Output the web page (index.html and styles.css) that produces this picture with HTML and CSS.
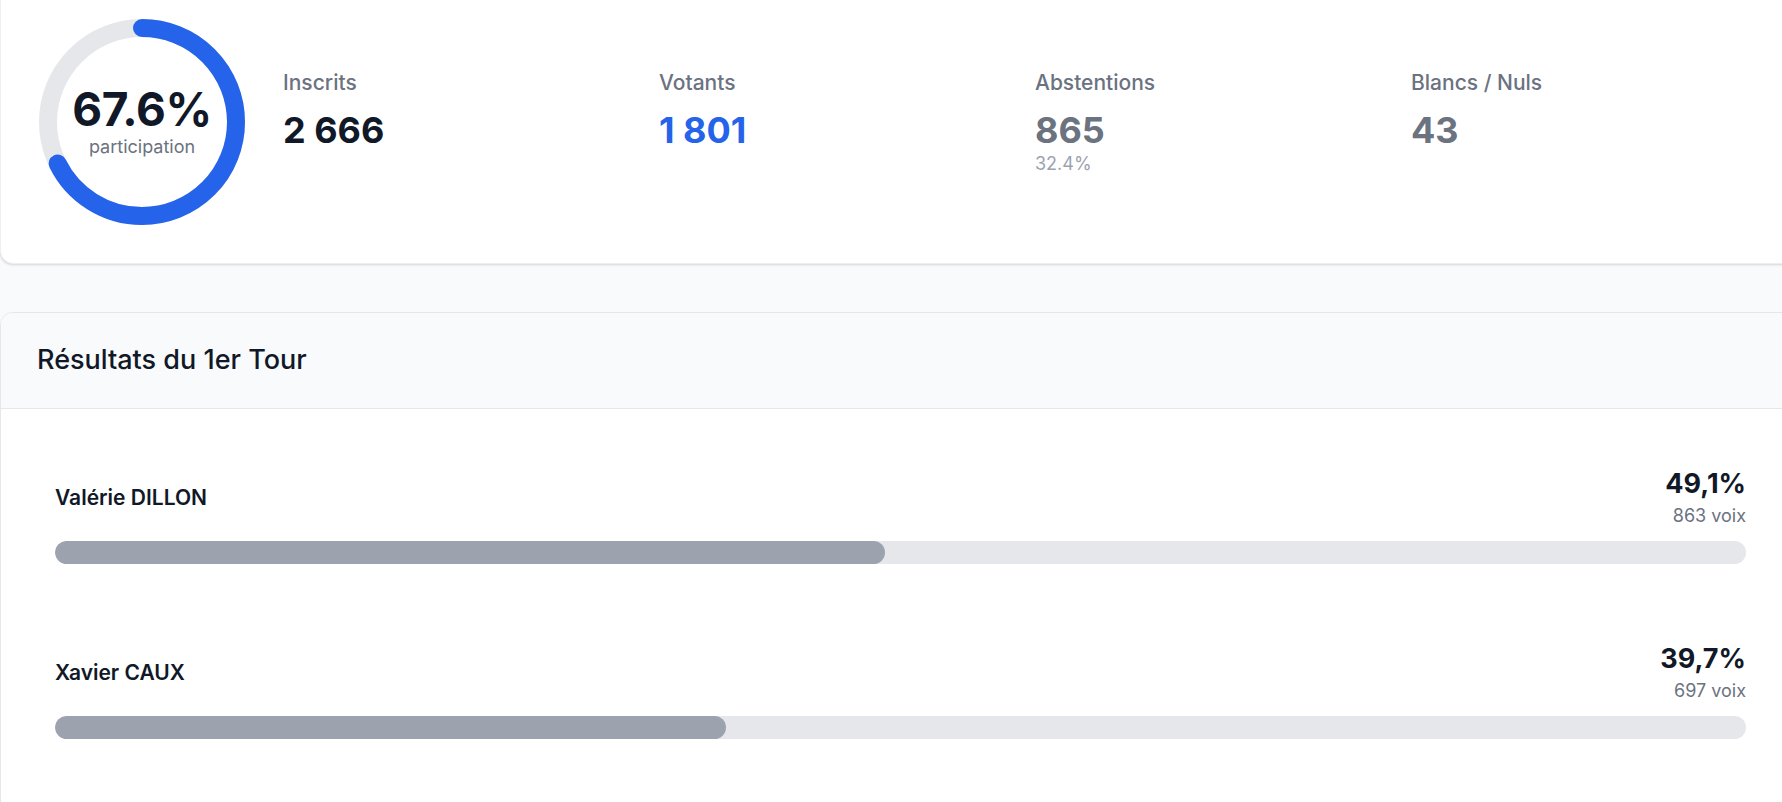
FILE: index.html
```html
<!DOCTYPE html>
<html lang="fr">
<head>
<meta charset="utf-8">
<title>Résultats</title>
<link rel="stylesheet" href="styles.css">
</head>
<body>
<div class="page">
  <section class="card summary">
    <div class="donut">
      <svg class="donut-svg" width="208" height="208" viewBox="0 0 208 208">
        <circle cx="104" cy="104" r="94" fill="none" stroke="#e5e7eb" stroke-width="18"/>
        <circle cx="104" cy="104" r="94" fill="none" stroke="#2563eb" stroke-width="18" stroke-linecap="round" stroke-dasharray="399.3 600" transform="rotate(-90 104 104)"/>
      </svg>
      <div class="donut-center">
        <div class="donut-pct">67.6%</div>
        <div class="donut-label">participation</div>
      </div>
    </div>
    <div class="stats">
      <div class="stat">
        <div class="stat-label">Inscrits</div>
        <div class="stat-value dark">2 666</div>
      </div>
      <div class="stat">
        <div class="stat-label">Votants</div>
        <div class="stat-value blue">1 801</div>
      </div>
      <div class="stat">
        <div class="stat-label">Abstentions</div>
        <div class="stat-value gray">865</div>
        <div class="stat-sub">32.4%</div>
      </div>
      <div class="stat">
        <div class="stat-label">Blancs / Nuls</div>
        <div class="stat-value gray">43</div>
      </div>
    </div>
  </section>

  <section class="card results">
    <header class="results-head">
      <h2 class="results-title">Résultats du 1er Tour</h2>
    </header>
    <div class="results-body">
      <div class="cand">
        <div class="cand-top">
          <div class="cand-name">Valérie DILLON</div>
          <div class="cand-score">
            <div class="cand-pct">49,1%</div>
            <div class="cand-votes">863 voix</div>
          </div>
        </div>
        <div class="track"><div class="fill" style="width:49.1%"></div></div>
      </div>
      <div class="cand">
        <div class="cand-top">
          <div class="cand-name">Xavier CAUX</div>
          <div class="cand-score">
            <div class="cand-pct">39,7%</div>
            <div class="cand-votes">697 voix</div>
          </div>
        </div>
        <div class="track"><div class="fill" style="width:39.7%"></div></div>
      </div>
    </div>
  </section>
</div>
</body>
</html>
```

FILE: styles.css
```css
* { box-sizing: border-box; }

html, body {
  margin: 0;
  padding: 0;
  background: #f9fafb;
  overflow: hidden;
}

body {
  font-family: Inter, "Noto Sans", "Liberation Sans", sans-serif;
  color: #111827;
}

.page {
  width: 1801px;
}

.card {
  background: #ffffff;
  border: 1px solid #e5e7eb;
  border-radius: 13px;
}

.summary {
  margin-top: -20px;
  padding: 37px;
  display: flex;
  align-items: center;
  gap: 37px;
  border-color: #eceef1;
  box-shadow: 0 1px 3px rgba(0, 0, 0, 0.10), 0 1px 2px rgba(0, 0, 0, 0.06);
}

.donut {
  position: relative;
  width: 208px;
  height: 208px;
  flex: none;
}

.donut-svg {
  display: block;
}

.donut-center {
  position: absolute;
  inset: 0;
  display: flex;
  flex-direction: column;
  align-items: center;
  justify-content: center;
}

.donut-pct {
  font-size: 46px;
  line-height: 46px;
  font-weight: 700;
  color: #111827;
  letter-spacing: -0.4px;
}

.donut-label {
  margin-top: 4px;
  font-size: 18px;
  line-height: 22px;
  color: #6b7280;
}

.stats {
  flex: 1;
  display: grid;
  grid-template-columns: repeat(4, 1fr);
  gap: 24px;
  align-items: start;
}

.stat-label {
  font-size: 21px;
  line-height: 28px;
  font-weight: 500;
  color: #6b7280;
}

.stat-value {
  margin-top: 15px;
  font-size: 36px;
  line-height: 36px;
  font-weight: 700;
}

.stat-value.dark { color: #111827; }
.stat-value.blue { color: #2563eb; }
.stat-value.gray { color: #6b7280; }

.stat-sub {
  margin-top: 4px;
  font-size: 18px;
  line-height: 24px;
  color: #9ca3af;
}

.results {
  margin-top: 48px;
  overflow: hidden;
}

.results-head {
  background: #f9fafb;
  border-bottom: 1px solid #e5e7eb;
  padding: 29px 36px 30px;
}

.results-title {
  margin: 0;
  font-size: 27px;
  line-height: 36px;
  font-weight: 500;
  color: #111827;
}

.results-body {
  padding: 57px 54px 120px;
  display: flex;
  flex-direction: column;
  gap: 77px;
}

.cand-top {
  display: flex;
  justify-content: space-between;
  align-items: center;
}

.cand-name {
  font-size: 21px;
  line-height: 28px;
  font-weight: 600;
  color: #111827;
}

.cand-score {
  text-align: right;
}

.cand-pct {
  font-size: 27px;
  line-height: 36px;
  font-weight: 700;
  color: #111827;
}

.cand-votes {
  font-size: 18px;
  line-height: 27px;
  color: #6b7280;
}

.track {
  margin-top: 12px;
  height: 23px;
  border-radius: 999px;
  background: #e5e7eb;
  overflow: hidden;
}

.fill {
  height: 100%;
  border-radius: 999px;
  background: #9ca3af;
}
```
